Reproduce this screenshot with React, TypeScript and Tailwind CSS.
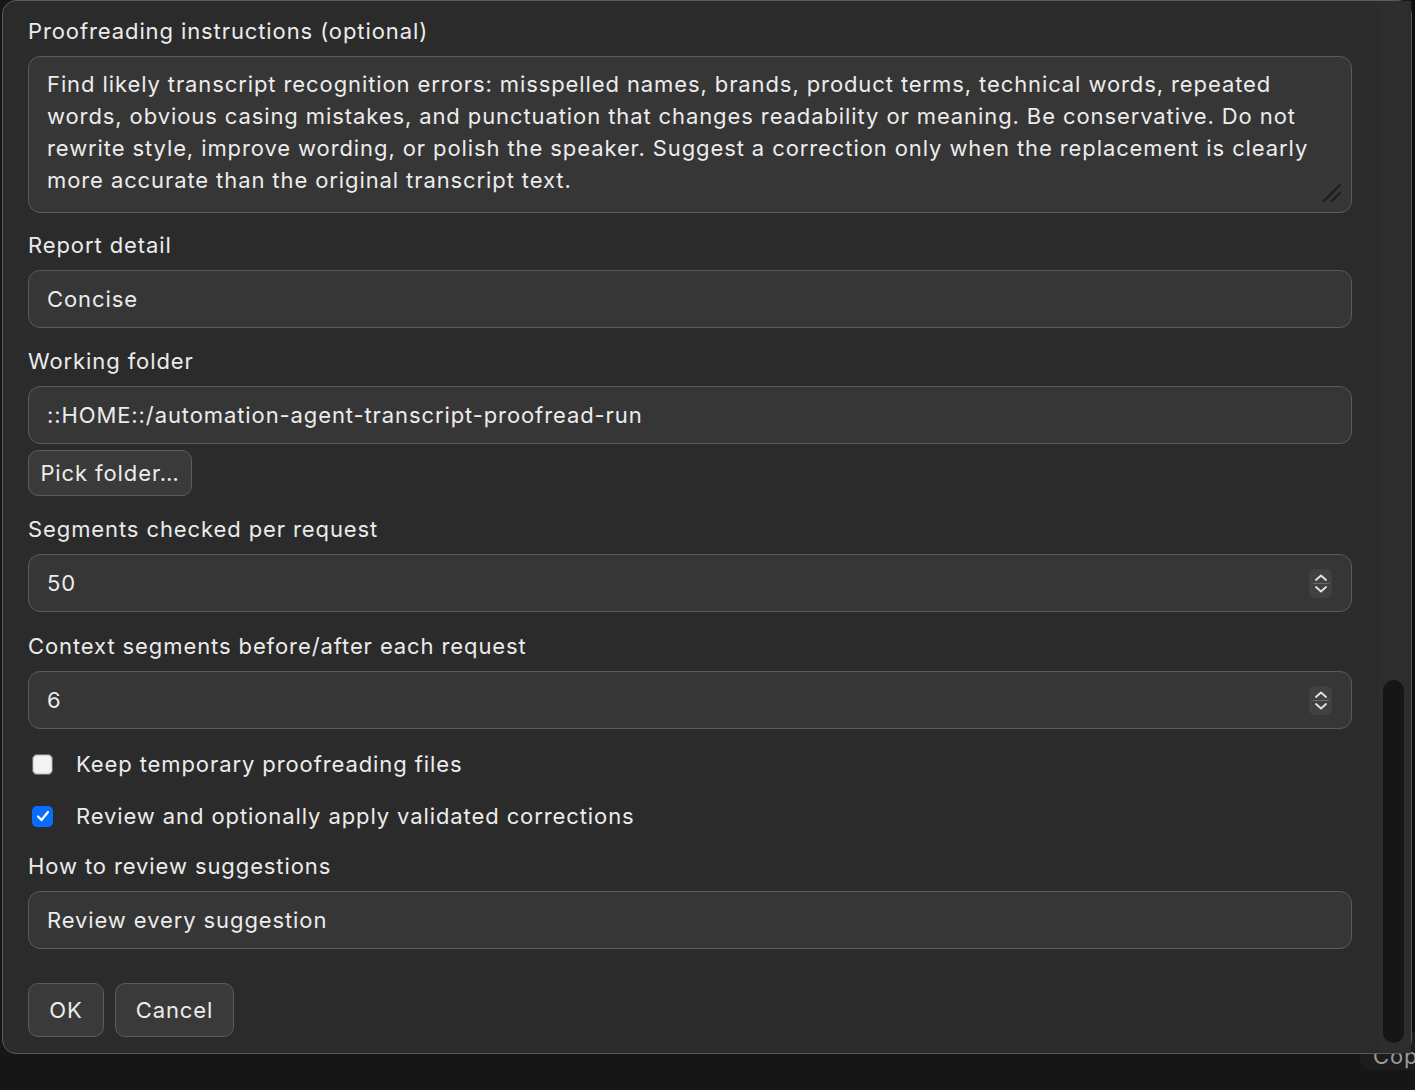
import React from "react";

const font = { fontFamily: 'Inter, "Noto Sans", "Liberation Sans", sans-serif' };

const Field = ({ label, children }: { label: string; children: React.ReactNode }) => (
  <div className="flex flex-col">
    <label className="h-[28px] text-[22px] leading-[28px] tracking-[0.9px] text-[#ebebeb]">{label}</label>
    <div className="mt-[11px]">{children}</div>
  </div>
);

const TextBox = ({ value, spinner }: { value: string; spinner?: boolean }) => (
  <div className="flex h-[58px] items-center rounded-[12px] border border-[#5a5a5a] bg-[#363636] pl-[18px] pr-[19px] text-[22px] tracking-[0.9px] text-[#ececec]">
    <span className="flex-1">{value}</span>
    {spinner && (
      <div className="flex h-[29px] w-[23px] flex-col items-center justify-center rounded-[6px] bg-[#414141]">
        <svg width="16" height="9" viewBox="0 0 16 9" fill="none" stroke="#e4e4e4" strokeWidth="1.8" strokeLinecap="round" strokeLinejoin="round">
          <path d="M3 7 L8 2.5 L13 7" />
        </svg>
        <div className="my-[1px] h-px w-[16px] bg-[#6a6a6a]" />
        <svg width="16" height="9" viewBox="0 0 16 9" fill="none" stroke="#e4e4e4" strokeWidth="1.8" strokeLinecap="round" strokeLinejoin="round">
          <path d="M3 2 L8 6.5 L13 2" />
        </svg>
      </div>
    )}
  </div>
);

const Checkbox = ({ checked, label }: { checked: boolean; label: string }) => (
  <div className="flex h-[32px] items-center">
    {checked ? (
      <div className="ml-[4px] flex h-[21px] w-[21px] items-center justify-center rounded-[5px] bg-[#0a6cff]">
        <svg width="14" height="12" viewBox="0 0 14 12" fill="none" stroke="white" strokeWidth="2.2" strokeLinecap="round" strokeLinejoin="round">
          <path d="M2 6.5 L5.5 10 L12 2" />
        </svg>
      </div>
    ) : (
      <div className="ml-[4px] h-[21px] w-[21px] rounded-[5px] border border-[#6b6b6b] bg-[#f4f4f4] shadow-[inset_0_0_2px_rgba(0,0,0,0.4)]" />
    )}
    <span className="ml-[23px] text-[22px] tracking-[0.9px] text-[#ececec]">{label}</span>
  </div>
);

const Btn = ({ children, className }: { children: React.ReactNode; className?: string }) => (
  <button className={"rounded-[10px] border border-[#5c5c5c] bg-[#3a3a3a] text-[22px] tracking-[0.9px] text-[#ececec] " + (className ?? "")}>
    {children}
  </button>
);

export default function App() {
  return (
    <div className="relative h-[1090px] w-[1415px] overflow-hidden bg-[#161616]" style={font}>
      {/* window behind the dialog */}
      <div className="absolute left-[1412px] top-0 h-[1040px] w-[3px] bg-[#0d0d0d]" />
      <div className="absolute left-[1360px] top-[1032px] flex h-[38px] w-[80px] items-end rounded-[10px] bg-[#1c1c1c] pl-[13px] text-[22px] leading-[28px] tracking-[0.9px] text-[#9a9a9a]">
        Copy
      </div>

      <div className="relative z-10 ml-[2px] flex h-[1054px] w-[1410px] rounded-[14px] border border-[#5a5a5a] bg-[#2b2b2b]">
        <div className="flex flex-1 flex-col pl-[25px] pr-[26px] pt-[16px]">
          <Field label="Proofreading instructions (optional)">
            <div className="relative h-[157px] rounded-[12px] border border-[#5a5a5a] bg-[#363636] pl-[18px] pt-[11px] text-[22px] leading-[32px] tracking-[0.9px] text-[#ececec]">
              <div>Find likely transcript recognition errors: misspelled names, brands, product terms, technical words, repeated</div>
              <div>words, obvious casing mistakes, and punctuation that changes readability or meaning. Be conservative. Do not</div>
              <div>rewrite style, improve wording, or polish the speaker. Suggest a correction only when the replacement is clearly</div>
              <div>more accurate than the original transcript text.</div>
              <svg className="absolute bottom-[9px] right-[9px]" width="20" height="20" viewBox="0 0 20 20" stroke="#1c1c1c" strokeWidth="2" strokeLinecap="round">
                <path d="M2 18 L18 2" />
                <path d="M10 18 L18 10" />
              </svg>
            </div>
          </Field>

          <div className="mt-[18px]">
            <Field label="Report detail">
              <TextBox value="Concise" />
            </Field>
          </div>

          <div className="mt-[19px]">
            <Field label="Working folder">
              <TextBox value="::HOME::/automation-agent-transcript-proofread-run" />
            </Field>
          </div>
          <div className="mt-[6px]">
            <Btn className="h-[46px] w-[164px]">Pick folder…</Btn>
          </div>

          <div className="mt-[19px]">
            <Field label="Segments checked per request">
              <TextBox value="50" spinner />
            </Field>
          </div>

          <div className="mt-[20px]">
            <Field label="Context segments before/after each request">
              <TextBox value="6" spinner />
            </Field>
          </div>

          <div className="mt-[19px]">
            <Checkbox checked={false} label="Keep temporary proofreading files" />
          </div>
          <div className="mt-[20px]">
            <Checkbox checked label="Review and optionally apply validated corrections" />
          </div>

          <div className="mt-[20px]">
            <Field label="How to review suggestions">
              <TextBox value="Review every suggestion" />
            </Field>
          </div>

          <div className="mt-[34px] flex gap-[11px]">
            <Btn className="h-[54px] w-[76px]">OK</Btn>
            <Btn className="h-[54px] w-[119px]">Cancel</Btn>
          </div>
        </div>

        {/* scrollbar */}
        <div className="flex w-[33px] flex-col bg-[#2d2d2d] pb-[10px] pl-[5px] pr-[6px]">
          <div className="mt-auto h-[363px] w-[21px] rounded-full bg-[#161616]" />
        </div>
      </div>
    </div>
  );
}
